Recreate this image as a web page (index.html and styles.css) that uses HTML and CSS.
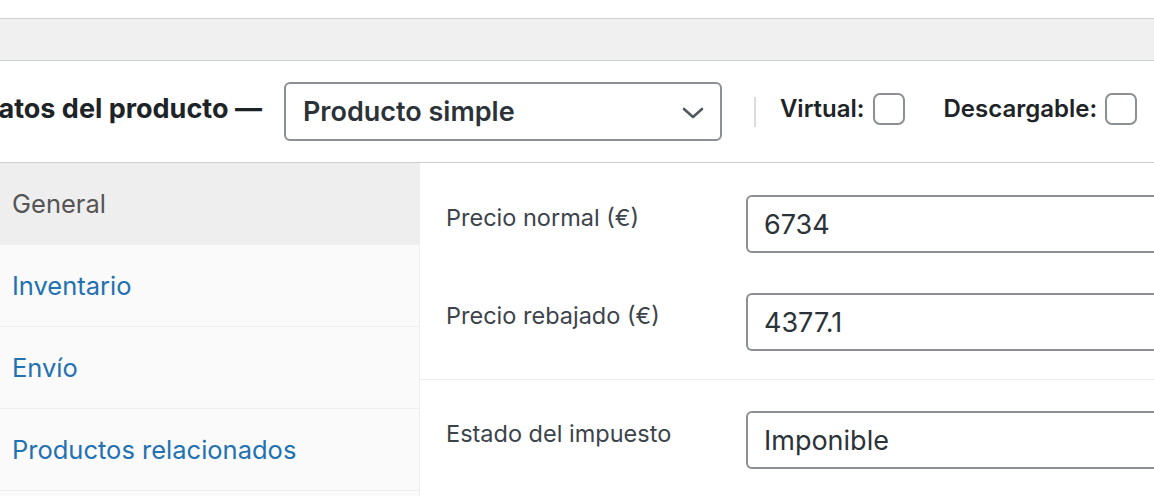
FILE: index.html
```html
<!DOCTYPE html>
<html lang="es">
<head>
    <meta charset="UTF-8">
    <meta name="viewport" content="width=device-width, initial-scale=1.0">
    <title>Datos del producto</title>
    <link rel="stylesheet" href="styles.css">
</head>
<body>
    <div class="topbar"></div>
    <div class="band"></div>

    <div class="postbox">
        <div class="box-header">
            <h2 class="box-title">Datos del producto —</h2>
            <div class="type-select">
                <span>Producto simple</span>
                <svg class="chevron" width="22" height="12" viewBox="0 0 22 12">
                    <path d="M2 2 L11 10 L20 2" fill="none" stroke="#50575e" stroke-width="2.6" stroke-linecap="round" stroke-linejoin="round"/>
                </svg>
            </div>
            <span class="sep"></span>
            <label class="opt">Virtual: <span class="check"></span></label>
            <label class="opt opt-last">Descargable: <span class="check"></span></label>
        </div>

        <div class="box-body">
            <ul class="tabs">
                <li class="tab active">General</li>
                <li class="tab"><a href="#">Inventario</a></li>
                <li class="tab"><a href="#">Envío</a></li>
                <li class="tab"><a href="#">Productos relacionados</a></li>
            </ul>

            <div class="panel">
                <div class="group">
                    <div class="field">
                        <label>Precio normal (€)</label>
                        <div class="input">6734</div>
                    </div>
                    <div class="field">
                        <label>Precio rebajado (€)</label>
                        <div class="input">4377.1</div>
                    </div>
                </div>
                <div class="group">
                    <div class="field">
                        <label>Estado del impuesto</label>
                        <div class="input">Imponible</div>
                    </div>
                </div>
            </div>
        </div>
    </div>
</body>
</html>
```

FILE: styles.css
```css
body {
    margin: 0;
    font-family: Inter, "Noto Sans", sans-serif;
    color: #1d2327;
    background-color: #fff;
    overflow: hidden;
}

.topbar {
    height: 18px;
    background-color: #fff;
    border-bottom: 1px solid #ccd0d4;
}

.band {
    height: 41px;
    background-color: #f0f0f1;
    border-bottom: 1px solid #ccd0d4;
}

.postbox {
    background-color: #fff;
}

.box-header {
    height: 101px;
    display: flex;
    align-items: center;
    border-bottom: 1px solid #ccd0d4;
}

.box-title {
    margin: 0 0 6px -21px;
    font-size: 27px;
    font-weight: 700;
    white-space: nowrap;
}

.type-select {
    margin-left: 22px;
    width: 438px;
    height: 59px;
    flex-shrink: 0;
    box-sizing: border-box;
    border: 2px solid #8c8f94;
    border-radius: 6px;
    display: flex;
    align-items: center;
    justify-content: space-between;
    padding: 0 16px 0 17px;
    font-size: 27px;
    font-weight: 600;
    color: #2c3338;
}

.chevron {
    margin-top: 2px;
}

.sep {
    margin-left: 32px;
    width: 2px;
    height: 30px;
    flex-shrink: 0;
    background-color: #dcdcde;
}

.opt {
    margin: 0 0 6px 24px;
    display: flex;
    align-items: center;
    font-size: 24px;
    font-weight: 600;
    white-space: nowrap;
}

.opt-last {
    margin-left: 39px;
}

.check {
    margin-left: 8px;
    width: 32px;
    height: 32px;
    flex-shrink: 0;
    box-sizing: border-box;
    border: 2px solid #8c8f94;
    border-radius: 7px;
    background-color: #fff;
}

.box-body {
    display: flex;
}

.tabs {
    list-style: none;
    margin: 0;
    padding: 0;
    width: 419px;
    flex-shrink: 0;
    background-color: #fafafa;
    border-right: 1px solid #eee;
}

.tab {
    height: 81px;
    display: flex;
    align-items: center;
    padding-left: 12px;
    font-size: 25.5px;
    border-bottom: 1px solid #eee;
}

.tab a {
    color: #2271b1;
    text-decoration: none;
}

.tab.active {
    background-color: #eee;
    color: #555;
    border-bottom-color: #eee;
}

.panel {
    flex: 1;
}

.group {
    display: flex;
    flex-direction: column;
    gap: 40px;
    padding: 32px 0 28px;
    border-bottom: 1px solid #eee;
}

.group + .group {
    padding-top: 31px;
}

.field {
    display: flex;
    align-items: flex-start;
}

.field label {
    width: 326px;
    flex-shrink: 0;
    padding-left: 26px;
    box-sizing: border-box;
    padding-top: 8px;
    font-size: 23.5px;
    line-height: 30px;
    color: #3c434a;
}

.input {
    flex: 1;
    height: 58px;
    box-sizing: border-box;
    border: 2px solid #8c8f94;
    border-radius: 6px 0 0 6px;
    border-right: none;
    display: flex;
    align-items: center;
    padding-left: 16px;
    font-size: 27px;
    color: #2c3338;
}
```
